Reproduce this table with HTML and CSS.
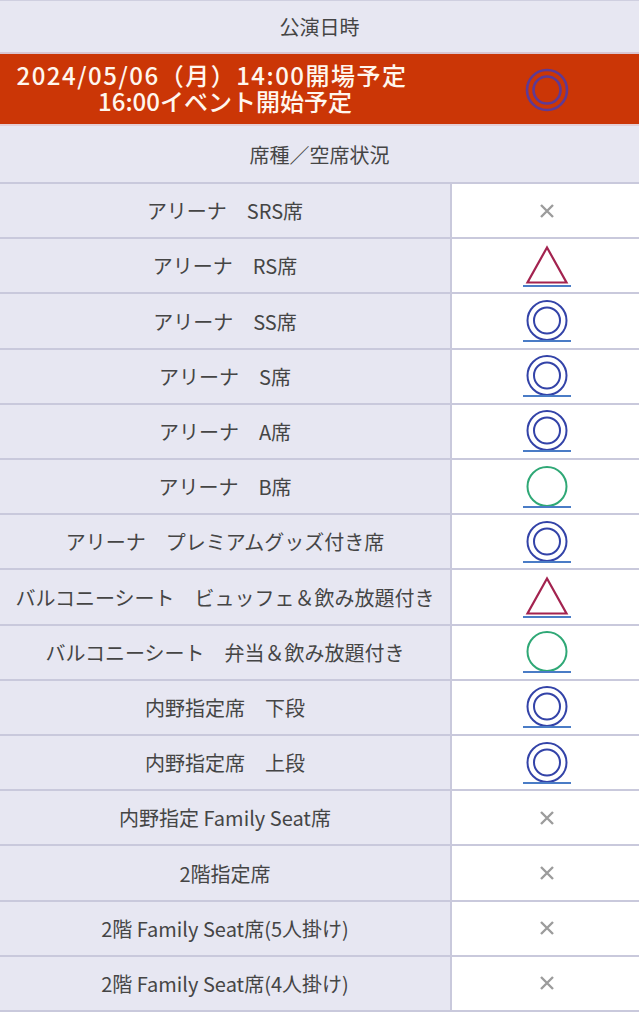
FILE: index.html
```html
<!DOCTYPE html>
<html lang="ja">
<head>
<meta charset="utf-8">
<title>公演日時</title>
<link rel="stylesheet" href="styles.css">
</head>
<body>
<div class="table">
  <div class="head head-top">公演日時</div>
  <div class="event">
    <div class="event-text">
      <span class="line1">2024/05/06（月）14:00開場予定</span>
      <span class="line2">16:00イベント開始予定</span>
    </div>
    <div class="event-mark">
      <svg width="48" height="48" viewBox="0 0 48 48"><circle cx="24" cy="24" r="20" fill="none" stroke="#5f3a94" stroke-width="2.6"/><circle cx="24" cy="24" r="13.5" fill="none" stroke="#5f3a94" stroke-width="2.6"/></svg>
    </div>
  </div>
  <div class="head head-seat">席種／空席状況</div>
  <div class="rows">
    <div class="row"><div class="name">アリーナ　SRS席</div><div class="mark"><svg class="cross" width="16" height="16" viewBox="0 0 16 16"><path d="M2 2L14 14M14 2L2 14" stroke="#9c9c9c" stroke-width="2.4"/></svg></div></div>
    <div class="row"><div class="name">アリーナ　RS席</div><div class="mark"><svg width="48" height="44" viewBox="0 0 48 44"><path d="M24 3.5L4.5 38.5H43.5Z" fill="none" stroke="#a3234f" stroke-width="2.2"/><path d="M0 42H48" stroke="#4a7cc6" stroke-width="2"/></svg></div></div>
    <div class="row"><div class="name">アリーナ　SS席</div><div class="mark"><svg width="48" height="44" viewBox="0 0 48 44"><circle cx="24" cy="21.5" r="19.5" fill="none" stroke="#3343a8" stroke-width="2"/><circle cx="24" cy="21.5" r="13" fill="none" stroke="#3343a8" stroke-width="2"/><path d="M0 42H48" stroke="#4a7cc6" stroke-width="2"/></svg></div></div>
    <div class="row"><div class="name">アリーナ　S席</div><div class="mark"><svg width="48" height="44" viewBox="0 0 48 44"><circle cx="24" cy="21.5" r="19.5" fill="none" stroke="#3343a8" stroke-width="2"/><circle cx="24" cy="21.5" r="13" fill="none" stroke="#3343a8" stroke-width="2"/><path d="M0 42H48" stroke="#4a7cc6" stroke-width="2"/></svg></div></div>
    <div class="row"><div class="name">アリーナ　A席</div><div class="mark"><svg width="48" height="44" viewBox="0 0 48 44"><circle cx="24" cy="21.5" r="19.5" fill="none" stroke="#3343a8" stroke-width="2"/><circle cx="24" cy="21.5" r="13" fill="none" stroke="#3343a8" stroke-width="2"/><path d="M0 42H48" stroke="#4a7cc6" stroke-width="2"/></svg></div></div>
    <div class="row"><div class="name">アリーナ　B席</div><div class="mark"><svg width="48" height="44" viewBox="0 0 48 44"><circle cx="24" cy="21.5" r="19.5" fill="none" stroke="#2fa876" stroke-width="2"/><path d="M0 42H48" stroke="#4a7cc6" stroke-width="2"/></svg></div></div>
    <div class="row"><div class="name">アリーナ　プレミアムグッズ付き席</div><div class="mark"><svg width="48" height="44" viewBox="0 0 48 44"><circle cx="24" cy="21.5" r="19.5" fill="none" stroke="#3343a8" stroke-width="2"/><circle cx="24" cy="21.5" r="13" fill="none" stroke="#3343a8" stroke-width="2"/><path d="M0 42H48" stroke="#4a7cc6" stroke-width="2"/></svg></div></div>
    <div class="row"><div class="name">バルコニーシート　ビュッフェ＆飲み放題付き</div><div class="mark"><svg width="48" height="44" viewBox="0 0 48 44"><path d="M24 3.5L4.5 38.5H43.5Z" fill="none" stroke="#a3234f" stroke-width="2.2"/><path d="M0 42H48" stroke="#4a7cc6" stroke-width="2"/></svg></div></div>
    <div class="row"><div class="name">バルコニーシート　弁当＆飲み放題付き</div><div class="mark"><svg width="48" height="44" viewBox="0 0 48 44"><circle cx="24" cy="21.5" r="19.5" fill="none" stroke="#2fa876" stroke-width="2"/><path d="M0 42H48" stroke="#4a7cc6" stroke-width="2"/></svg></div></div>
    <div class="row"><div class="name">内野指定席　下段</div><div class="mark"><svg width="48" height="44" viewBox="0 0 48 44"><circle cx="24" cy="21.5" r="19.5" fill="none" stroke="#3343a8" stroke-width="2"/><circle cx="24" cy="21.5" r="13" fill="none" stroke="#3343a8" stroke-width="2"/><path d="M0 42H48" stroke="#4a7cc6" stroke-width="2"/></svg></div></div>
    <div class="row"><div class="name">内野指定席　上段</div><div class="mark"><svg width="48" height="44" viewBox="0 0 48 44"><circle cx="24" cy="21.5" r="19.5" fill="none" stroke="#3343a8" stroke-width="2"/><circle cx="24" cy="21.5" r="13" fill="none" stroke="#3343a8" stroke-width="2"/><path d="M0 42H48" stroke="#4a7cc6" stroke-width="2"/></svg></div></div>
    <div class="row"><div class="name">内野指定 Family Seat席</div><div class="mark"><svg class="cross" width="16" height="16" viewBox="0 0 16 16"><path d="M2 2L14 14M14 2L2 14" stroke="#9c9c9c" stroke-width="2.4"/></svg></div></div>
    <div class="row"><div class="name">2階指定席</div><div class="mark"><svg class="cross" width="16" height="16" viewBox="0 0 16 16"><path d="M2 2L14 14M14 2L2 14" stroke="#9c9c9c" stroke-width="2.4"/></svg></div></div>
    <div class="row"><div class="name">2階 Family Seat席(5人掛け)</div><div class="mark"><svg class="cross" width="16" height="16" viewBox="0 0 16 16"><path d="M2 2L14 14M14 2L2 14" stroke="#9c9c9c" stroke-width="2.4"/></svg></div></div>
    <div class="row"><div class="name">2階 Family Seat席(4人掛け)</div><div class="mark"><svg class="cross" width="16" height="16" viewBox="0 0 16 16"><path d="M2 2L14 14M14 2L2 14" stroke="#9c9c9c" stroke-width="2.4"/></svg></div></div>
  </div>
</div>
</body>
</html>
```

FILE: styles.css
```css
html, body {
  margin: 0;
  padding: 0;
  background: #ffffff;
}

.table {
  width: 639px;
  height: 1012px;
  display: flex;
  flex-direction: column;
  box-sizing: border-box;
  border-top: 1px solid #cfcfe0;
  font-family: "Noto Sans CJK JP", "Noto Sans", sans-serif;
  color: #444;
  overflow: hidden;
}

.head {
  background: #e7e7f2;
  display: flex;
  align-items: center;
  justify-content: center;
  font-size: 20px;
  color: #454545;
  box-sizing: border-box;
}

.head-top {
  height: 53px;
  border-bottom: 2px solid #d9c6d2;
}

.event {
  height: 72px;
  box-sizing: border-box;
  background: #cb3606;
  border-bottom: 2px solid #e3cfd6;
  display: flex;
  align-items: center;
}

.event-text {
  width: 450px;
  display: flex;
  flex-direction: column;
  align-items: center;
  color: #fff6ee;
  font-size: 24px;
  font-weight: 500;
  line-height: 26px;
  padding-bottom: 2px;
}

.line1 {
  letter-spacing: 1.5px;
  padding-right: 26px;
}

.event-mark {
  flex: 1;
  display: flex;
  justify-content: center;
  padding-left: 4px;
  padding-top: 2px;
}

.head-seat {
  height: 58px;
  border-bottom: 2px solid #c9c9dc;
}

.rows {
  flex: 1;
  display: flex;
  flex-direction: column;
}

.row {
  flex: 1;
  display: flex;
  box-sizing: border-box;
  border-bottom: 2px solid #c9c9dc;
}

.name {
  width: 450px;
  background: #e7e7f2;
  border-right: 2px solid #c9c9dc;
  display: flex;
  align-items: center;
  justify-content: center;
  font-size: 20px;
  color: #454545;
  white-space: nowrap;
}

.mark {
  flex: 1;
  display: flex;
  align-items: center;
  justify-content: center;
  background: #ffffff;
  padding-left: 3px;
}

.cross {
  display: block;
}
```
